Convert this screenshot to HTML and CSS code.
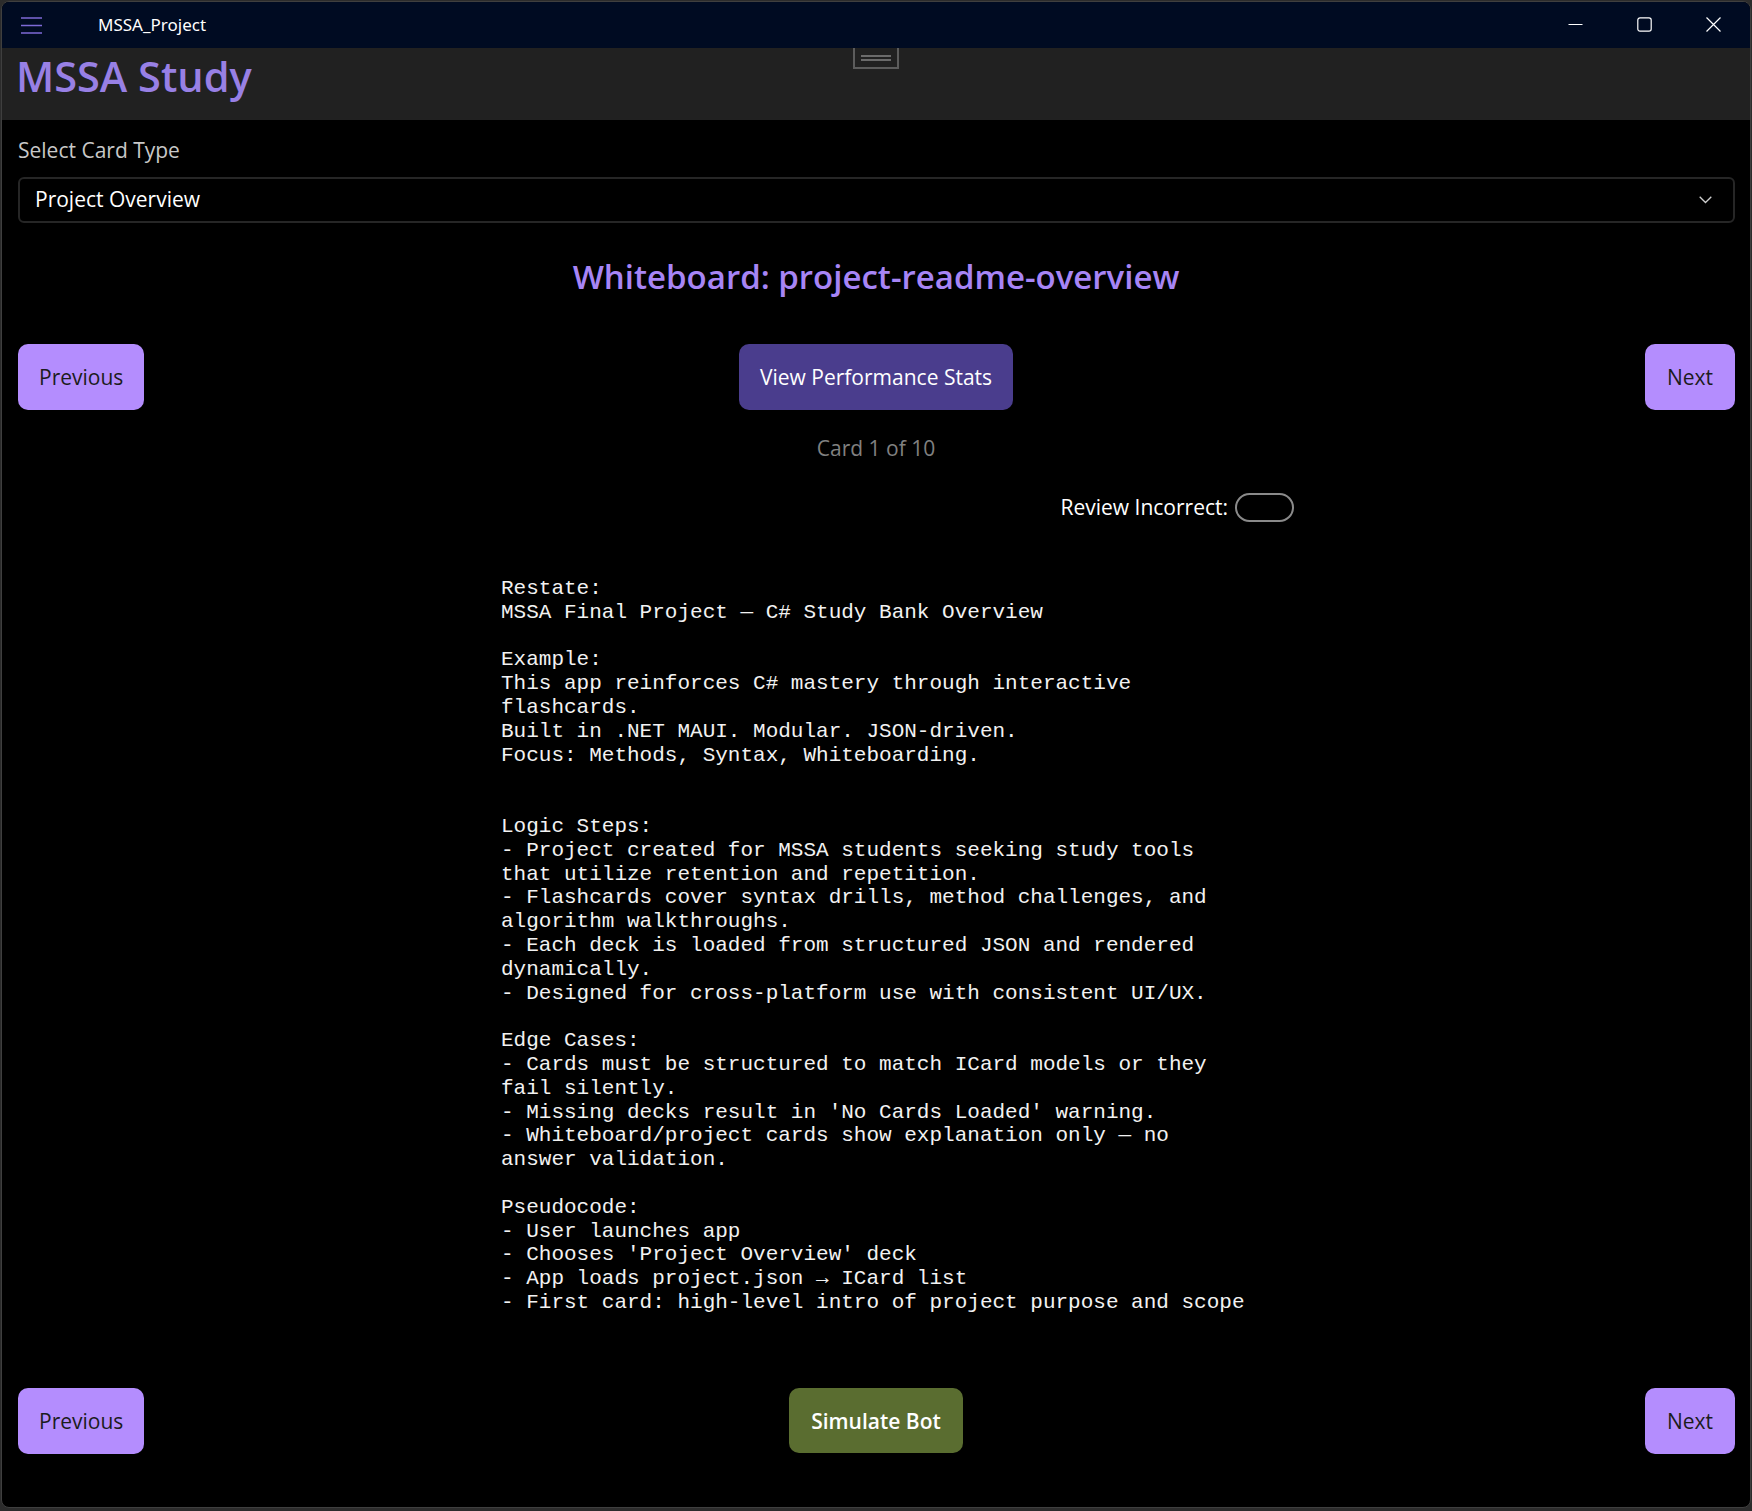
FILE: index.html
```html
<!DOCTYPE html>
<html lang="en">
<head>
<meta charset="utf-8">
<title>MSSA_Project</title>
<link rel="stylesheet" href="styles.css">
</head>
<body>
<div class="window">
  <div class="titlebar">
    <div class="titlebar-left">
      <svg class="hamburger" width="21" height="17" viewBox="0 0 21 17" aria-hidden="true"><path d="M0 1h21M0 8.5h21M0 16h21" stroke="#7d6ad6" stroke-width="1.6" fill="none"/></svg>
      <span class="app-title">MSSA_Project</span>
    </div>
    <div class="window-controls">
      <span class="caption-btn"><svg width="15" height="15" viewBox="0 0 15 15"><path d="M0.5 7.5h14" stroke="#fff" stroke-width="1.2" fill="none"/></svg></span>
      <span class="caption-btn"><svg width="15" height="15" viewBox="0 0 15 15"><rect x="0.8" y="0.8" width="13.4" height="13.4" rx="2.2" stroke="#fff" stroke-width="1.2" fill="none"/></svg></span>
      <span class="caption-btn"><svg width="15" height="15" viewBox="0 0 15 15"><path d="M0.5 0.5l14 14M14.5 0.5l-14 14" stroke="#fff" stroke-width="1.2" fill="none"/></svg></span>
    </div>
  </div>
  <header class="app-header">
    <h1 class="brand">MSSA Study</h1>
    <div class="drag-handle"><span></span><span></span></div>
  </header>
  <main class="content">
    <div class="field-label">Select Card Type</div>
    <div class="picker">
      <span>Project Overview</span>
      <svg width="13" height="8" viewBox="0 0 13 8" aria-hidden="true"><path d="M0.7 0.7l5.8 5.8 5.8-5.8" stroke="#cfcfcf" stroke-width="1.3" fill="none"/></svg>
    </div>
    <h2 class="card-title">Whiteboard: project-readme-overview</h2>
    <div class="nav-row">
      <button class="btn btn-nav">Previous</button>
      <button class="btn btn-stats">View Performance Stats</button>
      <button class="btn btn-nav btn-next">Next</button>
    </div>
    <div class="card-count">Card 1 of 10</div>
    <div class="review-row">
      <span class="review-label">Review Incorrect:</span>
      <span class="toggle"></span>
    </div>
    <pre class="card-body">Restate:
MSSA Final Project — C# Study Bank Overview

Example:
This app reinforces C# mastery through interactive
flashcards.
Built in .NET MAUI. Modular. JSON-driven.
Focus: Methods, Syntax, Whiteboarding.


Logic Steps:
- Project created for MSSA students seeking study tools
that utilize retention and repetition.
- Flashcards cover syntax drills, method challenges, and
algorithm walkthroughs.
- Each deck is loaded from structured JSON and rendered
dynamically.
- Designed for cross-platform use with consistent UI/UX.

Edge Cases:
- Cards must be structured to match ICard models or they
fail silently.
- Missing decks result in 'No Cards Loaded' warning.
- Whiteboard/project cards show explanation only — no
answer validation.

Pseudocode:
- User launches app
- Chooses 'Project Overview' deck
- App loads project.json → ICard list
- First card: high-level intro of project purpose and scope</pre>
    <div class="nav-row nav-bottom">
      <button class="btn btn-nav">Previous</button>
      <button class="btn btn-bot">Simulate Bot</button>
      <button class="btn btn-nav btn-next">Next</button>
    </div>
  </main>
</div>
</body>
</html>
```

FILE: styles.css
```css
* { box-sizing: border-box; }

html, body {
  margin: 0;
  padding: 0;
}

body {
  background: #2c2c2c;
  width: 1752px;
  height: 1511px;
  overflow: hidden;
  font-family: "Open Sans", "Noto Sans", sans-serif;
}

.window {
  margin: 1px 0 0 1px;
  width: 1750px;
  height: 1507px;
  border: 1px solid #3f3f3f;
  border-radius: 8px;
  overflow: hidden;
  background: #000;
  display: flex;
  flex-direction: column;
}

.titlebar {
  height: 46px;
  flex: none;
  background: #000b22;
  display: flex;
  align-items: center;
  justify-content: space-between;
}

.titlebar-left {
  display: flex;
  align-items: center;
  padding-left: 19px;
}

.hamburger { display: block; margin-top: 1px; }

.app-title {
  margin-left: 56px;
  color: #fff;
  font-family: "Noto Sans", "Open Sans", sans-serif;
  font-size: 17px;
  line-height: 24px;
  margin-top: -1px;
}

.window-controls {
  display: flex;
  height: 100%;
  margin-right: 2px;
}

.caption-btn {
  width: 69px;
  height: 100%;
  display: flex;
  align-items: center;
  justify-content: center;
}

.caption-btn svg { display: block; margin-top: -1px; }

.app-header {
  position: relative;
  height: 72px;
  flex: none;
  background: #212121;
  padding: 1px 0 0 14px;
}

.brand {
  margin: 0;
  font-size: 41.5px;
  line-height: 54px;
  font-weight: 600;
  color: #9880e5;
}

.drag-handle {
  position: absolute;
  left: 851px;
  top: 0;
  width: 46px;
  height: 21px;
  border: 2px solid #5c5c5c;
  border-top: none;
  display: flex;
  flex-direction: column;
  align-items: center;
  justify-content: center;
  gap: 2px;
  padding-top: 1px;
}

.drag-handle span {
  display: block;
  width: 30px;
  height: 2px;
  background: #6b6b6b;
}

.content {
  flex: 1;
  padding: 15px 15px 0 15px;
  display: flex;
  flex-direction: column;
}

.field-label {
  font-size: 21px;
  line-height: 30px;
  color: #c8c8c8;
  padding-left: 1px;
}

.picker {
  margin-top: 12px;
  margin-left: 1px;
  height: 46px;
  border: 2px solid #262626;
  border-radius: 6px;
  display: flex;
  align-items: center;
  justify-content: space-between;
  padding: 0 21px 0 15px;
  color: #fff;
  font-size: 21px;
}

.picker span { margin-top: -2px; }

.card-title {
  margin: 32px 0 0;
  text-align: center;
  font-size: 33px;
  line-height: 44px;
  font-weight: 600;
  color: #a785f5;
}

.nav-row {
  margin-top: 45px;
  display: grid;
  grid-template-columns: 1fr auto 1fr;
  align-items: center;
}

.nav-row .btn:first-child { justify-self: start; margin-left: 1px; }
.nav-row .btn-next { justify-self: end; }

.btn {
  height: 66px;
  border: none;
  border-radius: 10px;
  font-family: "Open Sans", "Noto Sans", sans-serif;
  font-size: 21px;
  padding: 0 21px;
  cursor: pointer;
}

.btn-nav {
  background: #b48dfe;
  color: #1c1c1c;
}

.btn-next { padding: 0 22px; }

.btn-stats {
  background: #4a3d8d;
  color: #fff;
  padding: 0 21px;
}

.btn-bot {
  background: #5a6d30;
  color: #fff;
  font-weight: 600;
  padding: 0 22px;
  height: 65px;
}

.card-count {
  margin-top: 24px;
  text-align: center;
  font-size: 21px;
  line-height: 28px;
  color: #808080;
}

.review-row {
  margin: 31px auto 0;
  width: 836px;
  display: flex;
  justify-content: flex-end;
  align-items: center;
  gap: 7px;
  height: 29px;
}

.review-label {
  color: #fff;
  font-size: 21px;
  line-height: 29px;
}

.toggle {
  width: 59px;
  height: 29px;
  border: 2px solid #8a8a8a;
  border-radius: 15px;
}

.card-body {
  margin: 55px auto 0;
  width: 750px;
  font-family: "Liberation Mono", "Courier New", monospace;
  font-size: 21px;
  line-height: 23.8px;
  color: #f2f2f2;
  white-space: pre-wrap;
}

.nav-bottom {
  margin-top: 73px;
}
```
